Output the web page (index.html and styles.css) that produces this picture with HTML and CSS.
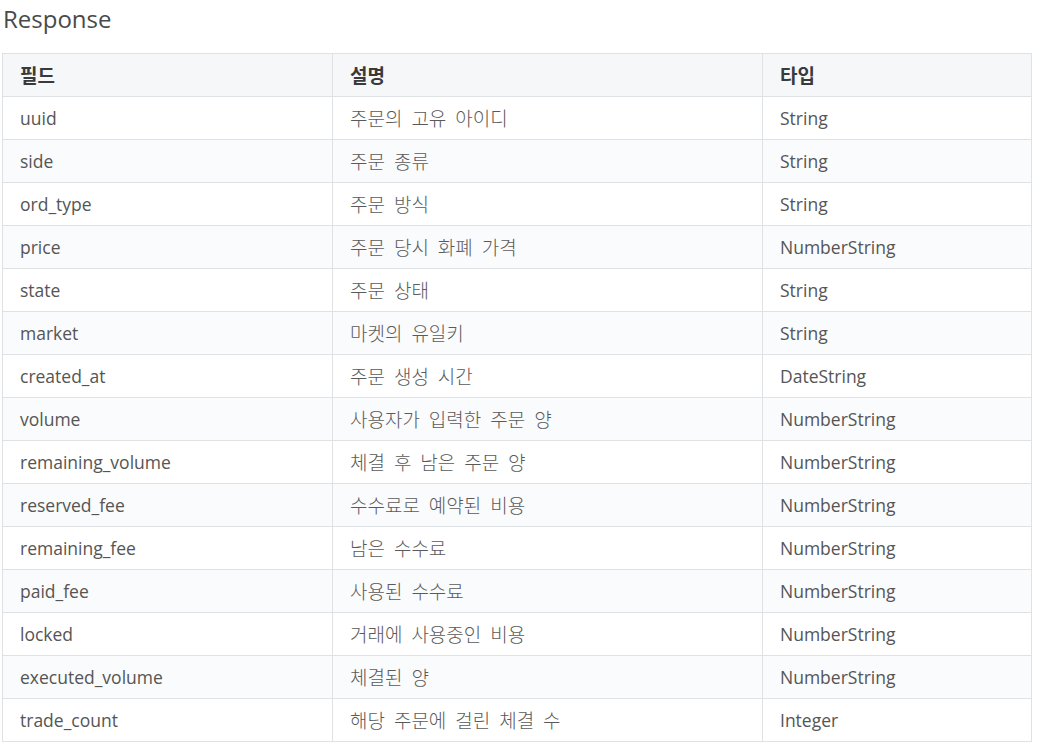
FILE: index.html
```html
<!DOCTYPE html>
<html lang="ko">
<head>
    <meta charset="UTF-8">
    <title>Response</title>
    <link rel="stylesheet" href="styles.css">
</head>
<body>
    <h3 class="title">Response</h3>
    <table class="fields">
        <colgroup>
            <col class="col-name">
            <col class="col-desc">
            <col class="col-type">
        </colgroup>
        <thead>
            <tr><th>필드</th><th>설명</th><th>타입</th></tr>
        </thead>
        <tbody>
            <tr><td>uuid</td><td class="ko">주문의 고유 아이디</td><td>String</td></tr>
            <tr><td>side</td><td class="ko">주문 종류</td><td>String</td></tr>
            <tr><td>ord_type</td><td class="ko">주문 방식</td><td>String</td></tr>
            <tr><td>price</td><td class="ko">주문 당시 화폐 가격</td><td>NumberString</td></tr>
            <tr><td>state</td><td class="ko">주문 상태</td><td>String</td></tr>
            <tr><td>market</td><td class="ko">마켓의 유일키</td><td>String</td></tr>
            <tr><td>created_at</td><td class="ko">주문 생성 시간</td><td>DateString</td></tr>
            <tr><td>volume</td><td class="ko">사용자가 입력한 주문 양</td><td>NumberString</td></tr>
            <tr><td>remaining_volume</td><td class="ko">체결 후 남은 주문 양</td><td>NumberString</td></tr>
            <tr><td>reserved_fee</td><td class="ko">수수료로 예약된 비용</td><td>NumberString</td></tr>
            <tr><td>remaining_fee</td><td class="ko">남은 수수료</td><td>NumberString</td></tr>
            <tr><td>paid_fee</td><td class="ko">사용된 수수료</td><td>NumberString</td></tr>
            <tr><td>locked</td><td class="ko">거래에 사용중인 비용</td><td>NumberString</td></tr>
            <tr><td>executed_volume</td><td class="ko">체결된 양</td><td>NumberString</td></tr>
            <tr><td>trade_count</td><td class="ko">해당 주문에 걸린 체결 수</td><td>Integer</td></tr>
        </tbody>
    </table>
</body>
</html>
```

FILE: styles.css
```css
body {
    margin: 0;
    padding: 0 2px;
    background: #fff;
    font-family: "Open Sans", "Noto Sans CJK KR", sans-serif;
    color: #555;
}
.title {
    margin: 0;
    padding: 3px 0 0 1px;
    height: 53px;
    box-sizing: border-box;
    font-size: 24px;
    font-weight: 400;
    color: #4a4a4a;
    line-height: 32px;
}
.fields {
    width: 1029px;
    border-collapse: collapse;
    table-layout: fixed;
    font-size: 17.5px;
}
.col-name { width: 330px; }
.col-desc { width: 430px; }
.col-type { width: 269px; }
th, td {
    height: 43px;
    padding: 0 17px;
    border: 1px solid #dfe2e5;
    text-align: left;
    box-sizing: border-box;
    white-space: nowrap;
}
th {
    background: #f6f7f9;
    color: #3a3a3a;
    font-size: 19px;
    font-weight: 700;
}
td {
    font-weight: 400;
}
td.ko {
    font-size: 19px;
    font-weight: 300;
    word-spacing: 4px;
    color: #5a5a5a;
}
tbody tr:nth-child(even) {
    background: #fafbfc;
}
```
